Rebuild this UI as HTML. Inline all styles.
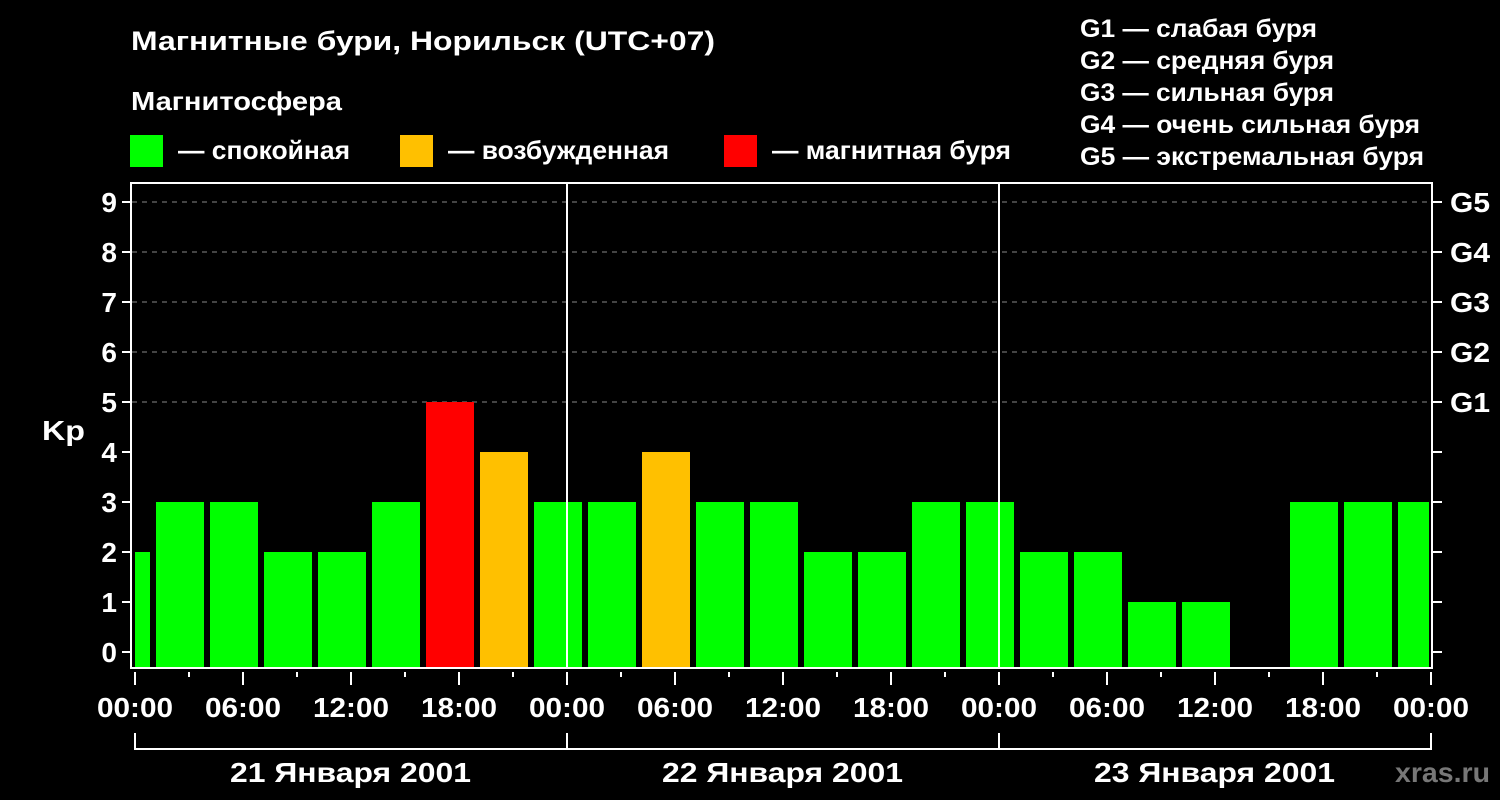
<!DOCTYPE html>
<html><head><meta charset="utf-8"><style>
html,body{margin:0;padding:0;background:#000;width:1500px;height:800px;overflow:hidden}
svg text{font-family:"Liberation Sans",sans-serif;font-weight:bold;fill:#fff}
</style></head><body>
<svg width="1500" height="800" viewBox="0 0 1500 800" xmlns="http://www.w3.org/2000/svg">
<g lengthAdjust="spacingAndGlyphs">
<text x="131" y="50" font-size="27" textLength="584" lengthAdjust="spacingAndGlyphs">Магнитные бури, Норильск (UTC+07)</text>
<text x="131" y="110" font-size="26" textLength="211" lengthAdjust="spacingAndGlyphs">Магнитосфера</text>
<rect x="130" y="135" width="33" height="32" fill="#00ff00"/>
<text x="178" y="159" font-size="26" textLength="172" lengthAdjust="spacingAndGlyphs">— спокойная</text>
<rect x="400" y="135" width="33" height="32" fill="#ffc000"/>
<text x="448" y="159" font-size="26" textLength="221" lengthAdjust="spacingAndGlyphs">— возбужденная</text>
<rect x="724" y="135" width="33" height="32" fill="#ff0000"/>
<text x="772" y="159" font-size="26" textLength="239" lengthAdjust="spacingAndGlyphs">— магнитная буря</text>
<text x="1080" y="37" font-size="25" textLength="237" lengthAdjust="spacingAndGlyphs">G1 — слабая буря</text>
<text x="1080" y="69" font-size="25" textLength="254" lengthAdjust="spacingAndGlyphs">G2 — средняя буря</text>
<text x="1080" y="101" font-size="25" textLength="254" lengthAdjust="spacingAndGlyphs">G3 — сильная буря</text>
<text x="1080" y="133" font-size="25" textLength="340" lengthAdjust="spacingAndGlyphs">G4 — очень сильная буря</text>
<text x="1080" y="165" font-size="25" textLength="344" lengthAdjust="spacingAndGlyphs">G5 — экстремальная буря</text>
</g>
<g stroke="#888" stroke-width="1" stroke-dasharray="5,5">
<line x1="132" y1="202" x2="1432" y2="202"/><line x1="132" y1="252" x2="1432" y2="252"/>
<line x1="132" y1="302" x2="1432" y2="302"/><line x1="132" y1="352" x2="1432" y2="352"/>
<line x1="132" y1="402" x2="1432" y2="402"/>
</g>
<g>
<rect x="135" y="552" width="15" height="116" fill="#00ff00"/>
<rect x="156" y="502" width="48" height="166" fill="#00ff00"/>
<rect x="210" y="502" width="48" height="166" fill="#00ff00"/>
<rect x="264" y="552" width="48" height="116" fill="#00ff00"/>
<rect x="318" y="552" width="48" height="116" fill="#00ff00"/>
<rect x="372" y="502" width="48" height="166" fill="#00ff00"/>
<rect x="426" y="402" width="48" height="266" fill="#ff0000"/>
<rect x="480" y="452" width="48" height="216" fill="#ffc000"/>
<rect x="534" y="502" width="48" height="166" fill="#00ff00"/>
<rect x="588" y="502" width="48" height="166" fill="#00ff00"/>
<rect x="642" y="452" width="48" height="216" fill="#ffc000"/>
<rect x="696" y="502" width="48" height="166" fill="#00ff00"/>
<rect x="750" y="502" width="48" height="166" fill="#00ff00"/>
<rect x="804" y="552" width="48" height="116" fill="#00ff00"/>
<rect x="858" y="552" width="48" height="116" fill="#00ff00"/>
<rect x="912" y="502" width="48" height="166" fill="#00ff00"/>
<rect x="966" y="502" width="48" height="166" fill="#00ff00"/>
<rect x="1020" y="552" width="48" height="116" fill="#00ff00"/>
<rect x="1074" y="552" width="48" height="116" fill="#00ff00"/>
<rect x="1128" y="602" width="48" height="66" fill="#00ff00"/>
<rect x="1182" y="602" width="48" height="66" fill="#00ff00"/>
<rect x="1290" y="502" width="48" height="166" fill="#00ff00"/>
<rect x="1344" y="502" width="48" height="166" fill="#00ff00"/>
<rect x="1398" y="502" width="31" height="166" fill="#00ff00"/>
</g>
<g stroke="#fff" stroke-width="2" fill="none">
<rect x="131" y="183" width="1301" height="485"/>
<line x1="567" y1="183" x2="567" y2="668"/><line x1="999" y1="183" x2="999" y2="668"/>
<path d="M122 202h9M122 252h9M122 302h9M122 352h9M122 402h9M122 452h9M122 502h9M122 552h9M122 602h9M122 652h9"/>
<path d="M1432 202h10M1432 252h10M1432 302h10M1432 352h10M1432 402h10M1432 452h10M1432 502h10M1432 552h10M1432 602h10M1432 652h10"/>
<path d="M135 672v13M243 672v13M351 672v13M459 672v13M567 672v13M675 672v13M783 672v13M891 672v13M999 672v13M1107 672v13M1215 672v13M1323 672v13M1431 672v13"/>
<path d="M189 672v5M297 672v5M405 672v5M513 672v5M621 672v5M729 672v5M837 672v5M945 672v5M1053 672v5M1161 672v5M1269 672v5M1377 672v5"/>
<path d="M135 733v16h1296v-16M567 733v16M999 733v16"/>
</g>
<g font-size="28" text-anchor="end">
<text x="117" y="212">9</text><text x="117" y="262">8</text><text x="117" y="312">7</text>
<text x="117" y="362">6</text><text x="117" y="412">5</text><text x="117" y="462">4</text>
<text x="117" y="512">3</text><text x="117" y="562">2</text><text x="117" y="612">1</text>
<text x="117" y="662">0</text>
</g>
<text x="42" y="440" font-size="28" textLength="43" lengthAdjust="spacingAndGlyphs">Kp</text>
<g font-size="28">
<text x="1450" y="212" textLength="40" lengthAdjust="spacingAndGlyphs">G5</text>
<text x="1450" y="262" textLength="40" lengthAdjust="spacingAndGlyphs">G4</text>
<text x="1450" y="312" textLength="40" lengthAdjust="spacingAndGlyphs">G3</text>
<text x="1450" y="362" textLength="40" lengthAdjust="spacingAndGlyphs">G2</text>
<text x="1450" y="412" textLength="40" lengthAdjust="spacingAndGlyphs">G1</text>
</g>
<g font-size="28">
<text x="97" y="717" textLength="76" lengthAdjust="spacingAndGlyphs">00:00</text>
<text x="205" y="717" textLength="76" lengthAdjust="spacingAndGlyphs">06:00</text>
<text x="313" y="717" textLength="76" lengthAdjust="spacingAndGlyphs">12:00</text>
<text x="421" y="717" textLength="76" lengthAdjust="spacingAndGlyphs">18:00</text>
<text x="529" y="717" textLength="76" lengthAdjust="spacingAndGlyphs">00:00</text>
<text x="637" y="717" textLength="76" lengthAdjust="spacingAndGlyphs">06:00</text>
<text x="745" y="717" textLength="76" lengthAdjust="spacingAndGlyphs">12:00</text>
<text x="853" y="717" textLength="76" lengthAdjust="spacingAndGlyphs">18:00</text>
<text x="961" y="717" textLength="76" lengthAdjust="spacingAndGlyphs">00:00</text>
<text x="1069" y="717" textLength="76" lengthAdjust="spacingAndGlyphs">06:00</text>
<text x="1177" y="717" textLength="76" lengthAdjust="spacingAndGlyphs">12:00</text>
<text x="1285" y="717" textLength="76" lengthAdjust="spacingAndGlyphs">18:00</text>
<text x="1393" y="717" textLength="76" lengthAdjust="spacingAndGlyphs">00:00</text>
<text x="230" y="782" textLength="241" lengthAdjust="spacingAndGlyphs">21 Января 2001</text>
<text x="662" y="782" textLength="241" lengthAdjust="spacingAndGlyphs">22 Января 2001</text>
<text x="1094" y="782" textLength="241" lengthAdjust="spacingAndGlyphs">23 Января 2001</text>
<text x="1395" y="782" textLength="95" lengthAdjust="spacingAndGlyphs" style="fill:#777">xras.ru</text>
</g>
</svg>
</body></html>
